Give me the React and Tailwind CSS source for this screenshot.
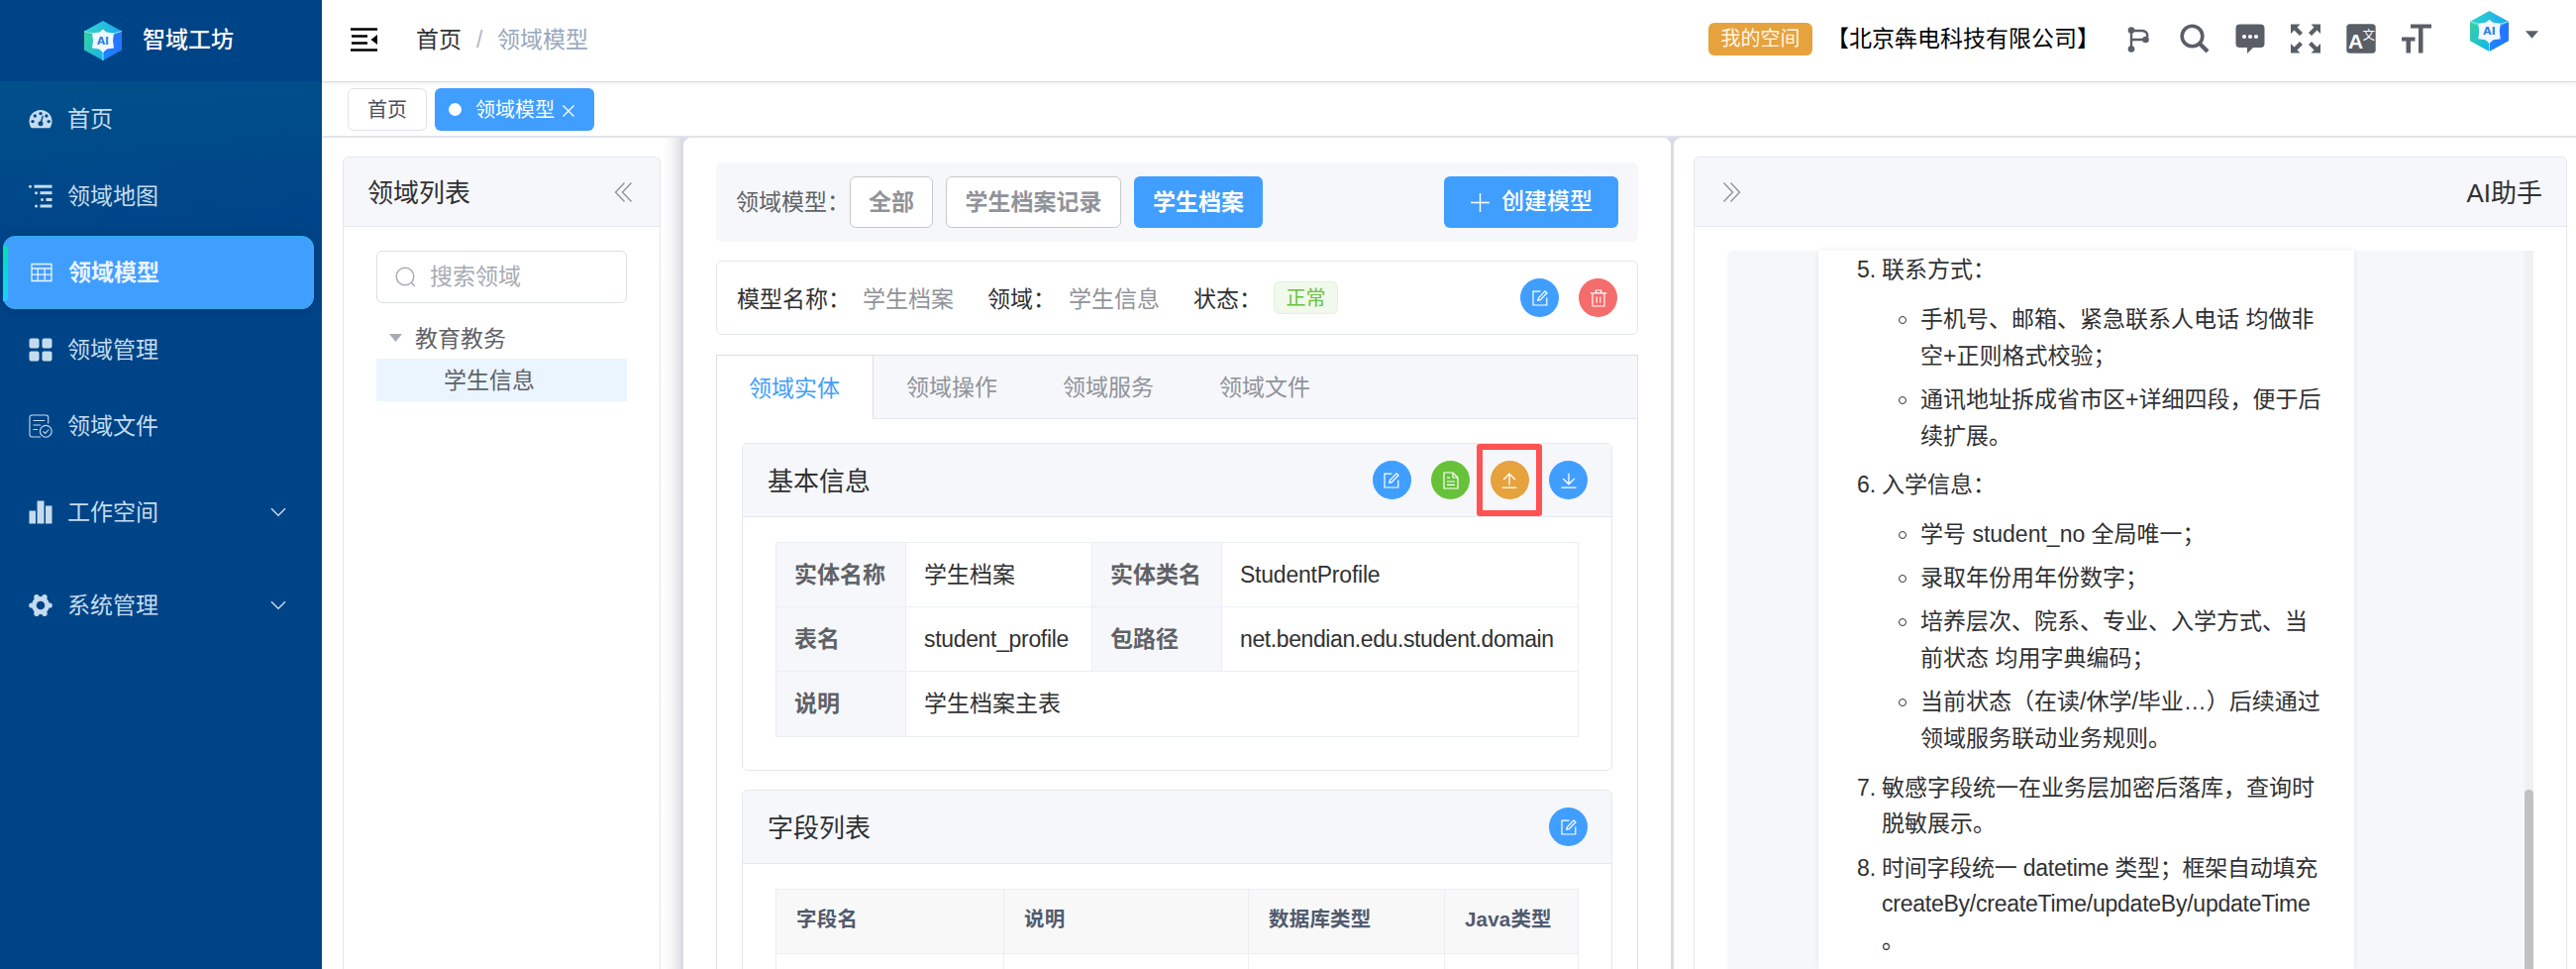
import clsx from "clsx";

const menuItems = [
  { label: "首页", icon: DashboardIcon },
  { label: "领域地图", icon: TreeIcon },
  { label: "领域模型", icon: TableIcon, active: true },
  { label: "领域管理", icon: GridIcon },
  { label: "领域文件", icon: FileCheckIcon },
];

const tabs = ["领域实体", "领域操作", "领域服务", "领域文件"];

const notes = [
  {
    no: 5,
    lines: ["联系方式："],
    children: [
      ["手机号、邮箱、紧急联系人电话 均做非", "空+正则格式校验；"],
      ["通讯地址拆成省市区+详细四段，便于后", "续扩展。"],
    ],
  },
  {
    no: 6,
    lines: ["入学信息："],
    children: [
      ["学号 student_no 全局唯一；"],
      ["录取年份用年份数字；"],
      ["培养层次、院系、专业、入学方式、当", "前状态 均用字典编码；"],
      ["当前状态（在读/休学/毕业…）后续通过", "领域服务联动业务规则。"],
    ],
  },
  { no: 7, lines: ["敏感字段统一在业务层加密后落库，查询时", "脱敏展示。"] },
  { no: 8, lines: ["时间字段统一 datetime 类型；框架自动填充", "createBy/createTime/updateBy/updateTime", "。"], tight: true },
];

/* ---------- icons ---------- */

function Logo({ className }) {
  return (
    <svg viewBox="0 0 38 40" className={className}>
      <defs>
        <linearGradient id="logoTop" x1="0" y1="0" x2="1" y2="0">
          <stop offset="0" stopColor="#2fd6c4" />
          <stop offset="1" stopColor="#1fa8f5" />
        </linearGradient>
        <linearGradient id="logoLeft" x1="0" y1="0" x2="1" y2="1">
          <stop offset="0" stopColor="#3ad29f" />
          <stop offset="1" stopColor="#12b5f0" />
        </linearGradient>
        <linearGradient id="logoRight" x1="0" y1="1" x2="1" y2="0">
          <stop offset="0" stopColor="#1a86ff" />
          <stop offset="1" stopColor="#2a70ff" />
        </linearGradient>
      </defs>
      <path d="M19 0L38 10.5L19 20L0 10.5Z" fill="url(#logoTop)" />
      <path d="M0 10.5L19 20V40L0 29.5Z" fill="url(#logoLeft)" />
      <path d="M38 10.5L19 20V40L38 29.5Z" fill="url(#logoRight)" />
      <path d="M0 10.5L8.5 13M38 10.5L29.5 13M19 30V40" stroke="#8fe6f5" strokeWidth="1" />
      <path
        d="M19 8.5L22.5 11.5L30 12.5L29 20L30 27.5L23 28.5L19 32L15 28.5L8 27.5L9 20L8 12.5L15.5 11.5Z"
        fill="#f1f8ff"
      />
      <text x="19" y="23.8" textAnchor="middle" fontSize="10.5" fontWeight="700" fontFamily="'DejaVu Sans'" fill="#2b7de9">
        AI
      </text>
    </svg>
  );
}

function DashboardIcon() {
  return (
    <svg viewBox="0 0 24 24" className="size-[24px]">
      <path d="M12 3C5.600 3 .5 8 .5 14.200c0 2.600.8 5 2.200 7h18.600c1.400-2 2.200-4.400 2.200-7C23.500 8 18.400 3 12 3Z" fill="currentColor" />
      <g fill="#004c8a">
        <circle cx="12" cy="6.600" r="1.700" />
        <circle cx="6.300" cy="9" r="1.700" />
        <circle cx="17.900" cy="9" r="1.700" />
        <circle cx="4" cy="14.600" r="1.700" />
        <circle cx="20.200" cy="14.600" r="1.700" />
        <circle cx="12" cy="16.800" r="2.500" />
        <path d="M11.200 16.500L13.700 8.500L14.800 8.900L13 17Z" />
      </g>
    </svg>
  );
}

function TreeIcon() {
  return (
    <svg viewBox="0 0 24 24" className="size-[24px]" fill="currentColor">
      <rect x="0" y=".7" width="3" height="3" rx="1.500" />
      <rect x="5.500" y=".7" width="18" height="3" />
      <rect x="6" y="7.200" width="3" height="3" rx="1.500" />
      <rect x="11.500" y="7.200" width="12" height="3" />
      <rect x="12" y="14" width="3" height="3" rx="1.500" />
      <rect x="17.500" y="14" width="6" height="3" />
      <rect x="6" y="20.500" width="3" height="3" rx="1.500" />
      <rect x="11.500" y="20.500" width="12" height="3" />
    </svg>
  );
}

function TableIcon() {
  return (
    <svg viewBox="0 0 24 24" className="size-[24px]" fill="none" stroke="currentColor" strokeWidth="1.300">
      <path d="M2 3.500H22V20.500H2ZM2 8H22M2 14.200H22M8.200 8V20.500M15.200 8V20.500" />
    </svg>
  );
}

function GridIcon() {
  return (
    <svg viewBox="0 0 24 24" className="size-[24px]" fill="currentColor">
      <rect x=".5" y=".5" width="10" height="10" rx="2" />
      <rect x="13.500" y=".5" width="10" height="10" rx="2" />
      <rect x=".5" y="13.500" width="10" height="10" rx="2" />
      <rect x="13.500" y="13.500" width="10" height="10" rx="2" />
    </svg>
  );
}

function FileCheckIcon() {
  return (
    <svg viewBox="0 0 24 24" className="size-[24px]" fill="none" stroke="currentColor" strokeWidth="1.100">
      <path d="M19.700 9.500V3.200a2.200 2.200 0 0 0-2.200-2.200H3.200A2.200 2.200 0 0 0 1 3.200V20.800A2.200 2.200 0 0 0 3.200 23H12" />
      <path d="M4.500 6.500H16M4.500 11H12M4.500 15.500H9" />
      <circle cx="17.300" cy="17.300" r="5.900" />
      <path d="M14.500 17.300L16.700 19.400L20.300 15.500" />
    </svg>
  );
}

function ChartIcon() {
  return (
    <svg viewBox="0 0 24 24" className="size-[24px]" fill="currentColor">
      <rect x=".5" y="10.500" width="6.500" height="13" />
      <rect x="8.500" y=".5" width="7" height="23" />
      <rect x="17" y="5.500" width="6.500" height="18" />
    </svg>
  );
}

// six rounded teeth round an open hub
function GearIcon() {
  return (
    <svg viewBox="0 0 24 24" className="size-[24px]" fill="none">
      <circle cx="12" cy="12" r="6.700" stroke="currentColor" strokeWidth="4.800" />
      <g fill="currentColor">
        <circle cx="8" cy="3.800" r="2.700" />
        <circle cx="16" cy="3.800" r="2.700" />
        <circle cx="8" cy="20.200" r="2.700" />
        <circle cx="16" cy="20.200" r="2.700" />
        <circle cx="2.800" cy="12" r="2.600" />
        <circle cx="21.200" cy="12" r="2.600" />
      </g>
    </svg>
  );
}

function Chevron() {
  return (
    <svg viewBox="0 0 16 10" className="h-[10px] w-4" fill="none" stroke="currentColor" strokeWidth="1.500">
      <path d="M1 1.200L8 8.200L15 1.200" />
    </svg>
  );
}

function DoubleArrow({ right }) {
  return (
    <svg viewBox="0 0 20 20" className={clsx("size-5 text-[#909399]", right && "rotate-180")} fill="none" stroke="currentColor" strokeWidth="1.400">
      <path d="M11.500 .5L2.500 10L11.500 19.500M18.500 .5L9.500 10L18.500 19.500" />
    </svg>
  );
}

function EditGlyph() {
  return (
    <svg viewBox="0 0 18 18" className="size-[18px]" fill="none" stroke="#fff" strokeWidth="1.200">
      <path d="M9.500 2.200H2V16H15.800V8.500" />
      <path d="M6.800 11.200L7.400 8.800L14 1.800L16 3.700L9.300 10.600Z" />
    </svg>
  );
}

function TrashGlyph() {
  return (
    <svg viewBox="0 0 18 18" className="size-[18px]" fill="none" stroke="#fff" strokeWidth="1.200">
      <path d="M.8 3.800H17.200M3 3.800V17H15V3.800M6.300 3.800V1H11.700V3.800M7.200 7.500V13.500M10.800 7.500V13.500" />
    </svg>
  );
}

function DocGlyph() {
  return (
    <svg viewBox="0 0 18 18" className="size-[18px]" fill="none" stroke="#fff" strokeWidth="1.200">
      <path d="M2 1H11L16 6V17H2ZM11 1V6H16M5 6.200H8M5 10H13M5 13.300H13" />
    </svg>
  );
}

function UploadGlyph() {
  return (
    <svg viewBox="0 0 18 18" className="size-[18px]" fill="none" stroke="#fff" strokeWidth="1.300">
      <path d="M1.500 16.200H16.500M9 13.500V2.500M3.200 8L9 2.200L14.800 8" />
    </svg>
  );
}

function DownloadGlyph() {
  return (
    <svg viewBox="0 0 18 18" className="size-[18px]" fill="none" stroke="#fff" strokeWidth="1.300">
      <path d="M1.500 16.200H16.500M9 1.800V12.500M3.200 7L9 12.800L14.800 7" />
    </svg>
  );
}

function HeaderIcons() {
  return (
    <div className="flex items-center text-[#5a5e66]">
      <svg viewBox="0 0 30 30" className="size-[30px]" fill="none" stroke="currentColor" strokeWidth="2.400">
        <path d="M7 7V25.500M7 7H17C25 7 25 16 19 16H7" />
        <g fill="currentColor" stroke="none">
          <circle cx="7" cy="6.500" r="3.300" />
          <circle cx="7" cy="25.500" r="3.300" />
          <circle cx="21.500" cy="16" r="3.300" />
        </g>
      </svg>
      <svg viewBox="0 0 30 30" className="ml-[26px] size-[30px]" fill="none" stroke="currentColor">
        <circle cx="12.500" cy="12.500" r="10.300" strokeWidth="3.600" />
        <path d="M19.500 19.500L28 28" strokeWidth="4.200" />
      </svg>
      <svg viewBox="0 0 30 30" className="ml-[26px] size-[30px]">
        <path d="M4.500 .5H25.500Q29.500 .5 29.500 4.500V20Q29.500 24 25.500 24H18L12 30V24H4.500Q.5 24 .5 20V4.500Q.5 .5 4.500 .5Z" fill="currentColor" />
        <g fill="#fff">
          <circle cx="9" cy="13" r="2.100" />
          <circle cx="15" cy="13" r="2.100" />
          <circle cx="21" cy="13" r="2.100" />
        </g>
      </svg>
      <svg viewBox="0 0 30 30" className="ml-[26px] size-[30px]">
        <g fill="currentColor">
          <path d="M0 .5H9.500L6.500 3.500L12 9L9 12L3.500 6.500L0 10Z" />
          <path d="M30 .5H20.500L23.500 3.500L18 9L21 12L26.500 6.500L30 10Z" />
          <path d="M0 29.500H9.500L6.500 26.500L12 21L9 18L3.500 23.500L0 20Z" />
          <path d="M30 29.500H20.500L23.500 26.500L18 21L21 18L26.500 23.500L30 20Z" />
        </g>
      </svg>
      <svg viewBox="0 0 30 30" className="ml-[26px] size-[30px]">
        <rect x=".3" y=".3" width="29.400" height="29.400" rx="3.500" fill="currentColor" />
        <text x="2" y="24.500" fontSize="21" fontWeight="700" fontFamily="'Liberation Sans'" fill="#fff">A</text>
        <text x="16.500" y="16" fontSize="12.500" fontFamily="'Noto Sans CJK SC'" fill="#fff">文</text>
      </svg>
      <svg viewBox="0 0 30 30" className="ml-[26px] size-[30px]" fill="currentColor">
        <path d="M9 .5H30V4.500H21.500V29.500H17V4.500H9Z" />
        <path d="M0 13.500H13.500V17.500H9V29.500H4.500V17.500H0Z" />
      </svg>
    </div>
  );
}

/* ---------- shared pieces ---------- */

function CircleButton({ className, children }) {
  return (
    <button className={clsx("flex size-[39px] items-center justify-center rounded-full", className)}>
      {children}
    </button>
  );
}

function Card({ title, actions, className, children }) {
  return (
    <section className={clsx("rounded-md border border-[#e4e7ed]", className)}>
      <div className="flex h-[74px] items-center justify-between rounded-t-md border-b border-[#e4e7ed] bg-[#f5f7fa] pr-6 pl-[25px]">
        <h3 className="pt-1 text-[26px]">{title}</h3>
        <div className="flex gap-[20.500px]">{actions}</div>
      </div>
      {children}
    </section>
  );
}

function Label({ children }) {
  return <div className="flex items-center border-r border-b border-[#ebeef5] bg-[#f5f7fa] pl-[18px] font-bold text-[#606266]">{children}</div>;
}

function Value({ className, children }) {
  return <div className={clsx("flex items-center border-r border-b border-[#ebeef5] pl-[18px]", className)}>{children}</div>;
}

/* ---------- layout ---------- */

function Sidebar() {
  return (
    <aside className="flex w-[325px] shrink-0 flex-col bg-[#004488] text-[23px] text-[#c5dcee]">
      <div className="flex h-[82px] shrink-0 items-center pl-[85px] text-white">
        <Logo className="h-[40px] w-[38px]" />
        <span className="ml-[21px] pb-px font-medium">智域工坊</span>
      </div>
      <nav className="flex grow flex-col bg-[linear-gradient(175deg,#00508b_0px,#004488_165px)] pt-px">
        {menuItems.map(({ label, icon: Icon, active }) => (
          <a
            key={label}
            className={clsx(
              "relative mb-[3.500px] ml-[3px] flex h-[74px] w-[314px] items-center pl-[26px]",
              active && "rounded-xl border border-[#2fb0ea] bg-[#409eff] pl-[25px] font-bold text-[#eaf4ff] shadow-[0_2px_10px_rgba(0,30,80,0.35)]"
            )}
          >
            {active && <i className="absolute top-[9px] -left-px h-[56px] w-[5px] rounded-r bg-linear-to-b from-[#00e6a0] to-[#22ccff]" />}
            <Icon />
            <span className="ml-[15px] pt-px">{label}</span>
          </a>
        ))}
        <a className="mt-[9.500px] ml-[29px] flex h-[74px] items-center">
          <ChartIcon />
          <span className="ml-[15px] grow">工作空间</span>
          <span className="mr-[36px]"><Chevron /></span>
        </a>
        <a className="mt-[20px] ml-[29px] flex h-[74px] items-center">
          <GearIcon />
          <span className="ml-[15px] grow">系统管理</span>
          <span className="mr-[36px]"><Chevron /></span>
        </a>
      </nav>
    </aside>
  );
}

function Header() {
  return (
    <header className="relative flex h-[83px] shrink-0 items-center border-b border-[#d8dce5] pr-[38px] pl-[29px] shadow-[0_1px_6px_rgba(0,21,41,0.08)]">
      <svg viewBox="0 0 27 24" className="mb-[3px] h-6 w-[27px]">
        <path d="M0 1.500H27M1 8.500H17M1 15.500H17M0 22.500H27" stroke="#000" strokeWidth="2.400" />
        <path d="M27 7V17L20.500 12Z" />
      </svg>
      <div className="ml-[39px] flex pb-[2px] text-[23px]">
        <span className="text-[#303133]">首页</span>
        <span className="mx-[15px] w-[6px] text-[#b0b8c4]">/</span>
        <span className="text-[#97a8be]">领域模型</span>
      </div>
      <div className="ml-auto flex items-center pb-[4px]">
        <span className="flex h-[33px] w-[105px] items-center justify-center rounded-md bg-[#e6a23c] text-[20px] text-[#fff6e6]">我的空间</span>
        <span className="ml-[14px] w-[301px] pt-px text-[23px] text-black">【北京犇电科技有限公司】</span>
        <HeaderIcons />
        <Logo className="mb-[15px] ml-[39px] h-[41px] w-[39px]" />
        <svg viewBox="0 0 14 8" className="mb-[9px] ml-[17px] h-2 w-[13px]"><path d="M0 0H14L7 8Z" fill="#5a5e66" /></svg>
      </div>
    </header>
  );
}

function TagsBar() {
  return (
    <div className="flex h-[56px] shrink-0 border-b-2 border-[#e0e4ed] pt-[6px] pl-[26px] text-[20px]">
      <span className="flex h-[43px] w-[80px] items-center justify-center rounded-md border border-[#dfe2e9] pt-px text-[#495060]">首页</span>
      <span className="ml-[8px] flex h-[43px] w-[161px] items-center rounded-md bg-[#409eff] pl-[14px] text-white">
        <i className="size-[13px] rounded-full bg-white" />
        <span className="ml-[14px] pt-px">领域模型</span>
        <svg viewBox="0 0 12 12" className="mt-[3px] ml-[8px] size-3" stroke="#fff" strokeWidth="1.300"><path d="M.5 .5L11.500 11.500M11.500 .5L.5 11.500" /></svg>
      </span>
    </div>
  );
}

function DomainList() {
  return (
    <div className="flex w-[362px] shrink-0 bg-[linear-gradient(to_right,#fff_344px,#f4f4f5_354px,#e2e3e6_362px)] pt-[19px] pr-5 pl-[21px]">
      <section className="grow rounded-t-md border border-b-0 border-[#e4e7ed] bg-white">
        <div className="flex h-[70px] items-center justify-between rounded-t-md border-b border-[#e4e7ed] bg-[#f5f7fa] pr-[27px] pl-[24px] text-[26px]">
          <span className="pt-1">领域列表</span>
          <DoubleArrow />
        </div>
        <div className="mx-[33px] mt-[24px] flex h-[53px] items-center rounded-md border-[1.500px] border-[#dcdfe6] pl-[18px] text-[23px] text-[#a8abb2]">
          <svg viewBox="0 0 21 21" className="size-[21px]" fill="none" stroke="currentColor" strokeWidth="1.500">
            <circle cx="10" cy="10" r="8.800" />
            <path d="M16.500 16.500L20 20" />
          </svg>
          <span className="ml-[14px]">搜索领域</span>
        </div>
        <div className="mx-[33px] mt-[14px] text-[23px] text-[#606266]">
          <div className="flex h-[42px] items-center pl-[13px]">
            <svg viewBox="0 0 13 8" className="h-2 w-[13px]"><path d="M0 0H13L6.500 8Z" fill="#a8abb2" /></svg>
            <span className="ml-[13px] pt-[2px]">教育教务</span>
          </div>
          <div className="flex h-[43px] items-center bg-[#ebf5ff] pt-[2px] pl-[68px]">学生信息</div>
        </div>
      </section>
    </div>
  );
}

function ModelPanel() {
  return (
    <main className="w-[997px] shrink-0 rounded-t-lg bg-white pt-[25px] pr-[33px] pl-[33px]">
      <div className="flex h-[80px] items-center rounded-md bg-[#f5f7fa] pr-[20px] pl-[20px] text-[23px]">
        <span className="text-[#606266]">领域模型：</span>
        <button className="h-[52px] w-[84px] rounded-md border border-[#c8c9cc] bg-white font-bold text-[#909399]">全部</button>
        <button className="ml-[13px] h-[52px] w-[177px] rounded-md border border-[#c8c9cc] bg-white font-bold text-[#909399]">学生档案记录</button>
        <button className="ml-[13px] h-[52px] w-[130px] rounded-md bg-[#409eff] font-bold text-white">学生档案</button>
        <button className="ml-auto flex h-[52px] w-[176px] items-center rounded-md bg-[#409eff] pl-[27px] font-medium text-white">
          <svg viewBox="0 0 19 19" className="size-[19px]" stroke="#fff" strokeWidth="1.400"><path d="M9.500 0V19M0 9.500H19" /></svg>
          <span className="ml-[12px] pb-[2px]">创建模型</span>
        </button>
      </div>

      <div className="mt-[19px] flex h-[75px] items-center rounded-md border border-[#e4e7ed] pr-[20px] pl-[20px] text-[23px]">
        <span className="w-[127px] pt-[3px]">模型名称：</span>
        <span className="w-[126px] pt-[3px] text-[#909399]">学生档案</span>
        <span className="w-[82px] pt-[3px]">领域：</span>
        <span className="w-[126px] pt-[3px] text-[#909399]">学生信息</span>
        <span className="w-[81px] pt-[3px]">状态：</span>
        <span className="flex h-[33px] w-[65px] items-center justify-center rounded-md border border-[#e1f3d8] bg-[#f0f9eb] text-[20px] text-[#67c23a]">正常</span>
        <div className="ml-auto flex gap-[20px]">
          <CircleButton className="bg-[#409eff]"><EditGlyph /></CircleButton>
          <CircleButton className="bg-[#f56c6c]"><TrashGlyph /></CircleButton>
        </div>
      </div>

      <div className="mt-[20px] border border-b-0 border-[#dcdfe6]">
        <div className="flex h-[64px] bg-[#f5f7fa] text-[23px]">
          {tabs.map((tab, i) => (
            <span
              key={tab}
              className={clsx(
                "flex w-[158px] items-center pt-[2px]",
                i === 0
                  ? "border-r border-[#dcdfe6] bg-white pl-[32px] text-[#409eff]"
                  : "border-b border-[#e4e7ed] pl-[33px] text-[#909399]"
              )}
            >
              {tab}
            </span>
          ))}
          <span className="grow border-b border-[#e4e7ed]" />
        </div>
        <div className="px-[25px] pt-[24px]">
          <Card
            title="基本信息"
            className="h-[331px]"
            actions={
              <>
                <CircleButton className="bg-[#409eff]"><EditGlyph /></CircleButton>
                <CircleButton className="bg-[#67c23a]"><DocGlyph /></CircleButton>
                <div className="relative">
                  <CircleButton className="bg-[#e6a23c]"><UploadGlyph /></CircleButton>
                  <i className="absolute -top-[17px] -left-[14px] h-[73px] w-[66px] rounded-[3px] border-[6px] border-[#ff5252]" />
                </div>
                <CircleButton className="bg-[#409eff]"><DownloadGlyph /></CircleButton>
              </>
            }
          >
            <div className="mx-[33px] mt-[25px] grid w-[811px] grid-cols-[131px_188px_131px_360px] grid-rows-[65px_65px_66px] border-t border-l border-[#ebeef5] text-[23px]">
              <Label>实体名称</Label>
              <Value>学生档案</Value>
              <Label>实体类名</Label>
              <Value className="tracking-[-0.220px]">StudentProfile</Value>
              <Label>表名</Label>
              <Value className="tracking-[-0.330px]">student_profile</Value>
              <Label>包路径</Label>
              <Value className="tracking-[-0.400px]">net.bendian.edu.student.domain</Value>
              <Label>说明</Label>
              <Value className="col-span-3">学生档案主表</Value>
            </div>
          </Card>

          <Card
            title="字段列表"
            className="mt-[19px] h-[400px]"
            actions={<CircleButton className="bg-[#409eff]"><EditGlyph /></CircleButton>}
          >
            <div className="mx-[33px] mt-[25px] grid w-[811px] grid-cols-[230px_247px_198px_135px] grid-rows-[65px_200px] border-t border-l border-[#ebeef5] text-[20.500px] font-bold text-[#515a6e]">
              {["字段名", "说明", "数据库类型", "Java类型"].map((col) => (
                <div key={col} className="flex items-center border-r border-b border-[#ebeef5] bg-[#f8f8f9] pb-[3px] pl-[20px] tracking-[0.200px]">{col}</div>
              ))}
              {[1, 2, 3, 4].map((n) => (
                <div key={n} className="border-r border-[#ebeef5]" />
              ))}
            </div>
          </Card>
        </div>
      </div>
    </main>
  );
}

function Lines({ lines }) {
  return lines.map((line) => <p key={line}>{line}</p>);
}

function Assistant() {
  return (
    <div className="flex grow rounded-tl-lg bg-white pt-[19px] pr-[9px] pl-[20px]">
      <section className="flex grow flex-col rounded-t-md border border-b-0 border-[#e4e7ed]">
        <div className="flex h-[70px] shrink-0 items-center justify-between rounded-t-md border-b border-[#e4e7ed] bg-[#f5f7fa] pr-[24px] pl-[28px] text-[26px]">
          <DoubleArrow right />
          <span className="pt-1">AI助手</span>
        </div>
        <div className="mt-[24px] mr-[33px] ml-[33px] flex grow rounded-tl-md bg-[#f5f7fa]">
          <div className="ml-[92px] w-[541px] bg-white pt-[1px] pl-[39px] text-[23px] leading-[36.800px] whitespace-nowrap shadow-[0_0_6px_rgba(0,0,0,0.08)]">
            {notes.map((note) => (
              <div key={note.no} className="mb-[7.500px] flex">
                <span className="w-[25px] shrink-0">{note.no}.</span>
                <div className={clsx(note.tight && "tracking-[-0.240px]")}>
                  <Lines lines={note.lines} />
                  {note.children && (
                    <ul className="mt-[13px] mb-[12.500px] space-y-[7.500px] pl-[39px]">
                      {note.children.map((child) => (
                        <li key={child[0]} className="relative">
                          <i className="absolute top-[15px] -left-[22px] size-[8px] rounded-full border-[1.500px] border-[#303133]" />
                          <Lines lines={child} />
                        </li>
                      ))}
                    </ul>
                  )}
                </div>
              </div>
            )).map((el, i) => (
              <div key={i} className={clsx(notes[i].children && "-mb-[7.500px]")}>{el}</div>
            ))}
          </div>
          <div className="ml-auto w-[9px] bg-[#f1f1f1] pt-[544px]">
            <div className="h-full rounded-t-full bg-[#c1c1c1]" />
          </div>
        </div>
      </section>
    </div>
  );
}

export default function App() {
  return (
    <div className="flex h-[978px] w-[2601px] overflow-hidden bg-white font-['Liberation_Sans','Noto_Sans_CJK_SC',sans-serif] text-[#303133]">
      <Sidebar />
      <div className="flex min-w-0 grow flex-col">
        <Header />
        <TagsBar />
        <div className="flex min-h-0 grow gap-[3px] overflow-hidden bg-[#d9dce3]">
          <DomainList />
          <ModelPanel />
          <Assistant />
        </div>
      </div>
    </div>
  );
}
